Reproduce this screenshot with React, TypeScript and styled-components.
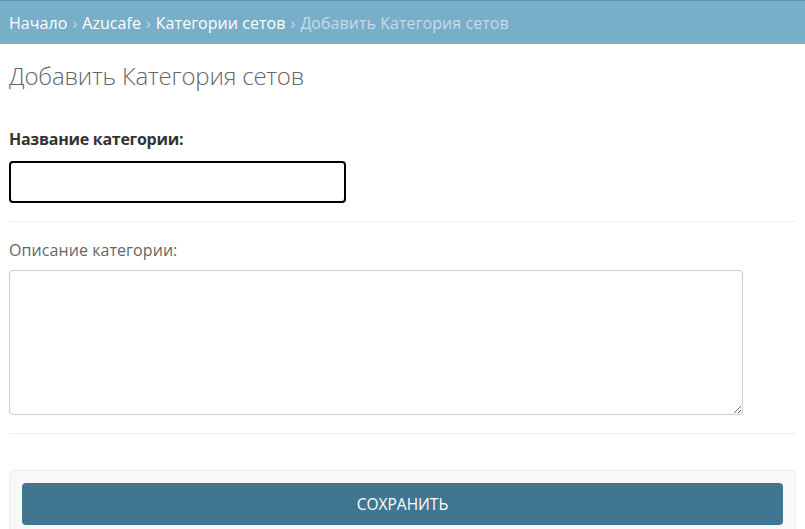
import React from "react";
import styled, { createGlobalStyle } from "styled-components";

const Global = createGlobalStyle`
  html, body { margin: 0; padding: 0; background: #fff; }
  body { font-family: "Open Sans", "Noto Sans", sans-serif; color: #333; }
  * { box-sizing: border-box; }
`;

const Breadcrumbs = styled.nav`
  background: #79aec8;
  border-top: 1px solid #5f94ae;
  height: 44px;
  padding: 0 9px;
  display: flex;
  align-items: center;
  font-size: 16px;
  color: #c4dce8;
  letter-spacing: 0.05px;
`;

const Crumb = styled.a`
  color: #fff;
  text-decoration: none;
`;

const Sep = styled.span`
  margin: 0 5px;
  color: #c4dce8;
`;

const Content = styled.main`
  padding: 16px 9px 0 9px;
`;

const Title = styled.h1`
  margin: 0 0 37px 0;
  font-size: 24px;
  font-weight: 300;
  color: #666;
  letter-spacing: -0.2px;
  line-height: 32px;
`;

const Row = styled.div`
  display: flex;
  flex-direction: column;
  padding-bottom: 18px;
  border-bottom: 1px solid #eee;
  margin-bottom: 18px;
`;

const Label = styled.label<{ $required?: boolean }>`
  font-size: 16px;
  font-weight: ${(p) => (p.$required ? 700 : 400)};
  color: ${(p) => (p.$required ? "#333" : "#666")};
  margin-bottom: ${(p) => (p.$required ? 12 : 10)}px;
  line-height: 20px;
  letter-spacing: ${(p) => (p.$required ? "-0.27px" : "0.07px")};
`;

const TextInput = styled.input`
  width: 337px;
  height: 42px;
  border: 2px solid #000;
  border-radius: 4px;
  outline: none;
  font: inherit;
`;

const TextArea = styled.textarea`
  width: 734px;
  height: 145px;
  border: 1px solid #ccc;
  border-radius: 4px;
  font: inherit;
  resize: vertical;
  display: block;
`;

const SubmitRow = styled.div`
  margin-top: 36px;
  background: #f8f8f8;
  border: 1px solid #eee;
  border-radius: 4px;
  padding: 12px;
  display: flex;
`;

const SaveButton = styled.button`
  flex: 1;
  height: 42px;
  background: #417690;
  color: #fff;
  border: none;
  border-radius: 4px;
  font-family: inherit;
  font-size: 15.5px;
  text-transform: uppercase;
  cursor: pointer;
`;

export default function App() {
  return (
    <>
      <Global />
      <Breadcrumbs>
        <Crumb href="#">Начало</Crumb>
        <Sep>›</Sep>
        <Crumb href="#">Azucafe</Crumb>
        <Sep>›</Sep>
        <Crumb href="#">Категории сетов</Crumb>
        <Sep>›</Sep>
        <span>Добавить Категория сетов</span>
      </Breadcrumbs>
      <Content>
        <Title>Добавить Категория сетов</Title>
        <Row>
          <Label $required htmlFor="name">Название категории:</Label>
          <TextInput id="name" type="text" />
        </Row>
        <Row>
          <Label htmlFor="desc">Описание категории:</Label>
          <TextArea id="desc" />
        </Row>
        <SubmitRow>
          <SaveButton type="submit">Сохранить</SaveButton>
        </SubmitRow>
      </Content>
    </>
  );
}
